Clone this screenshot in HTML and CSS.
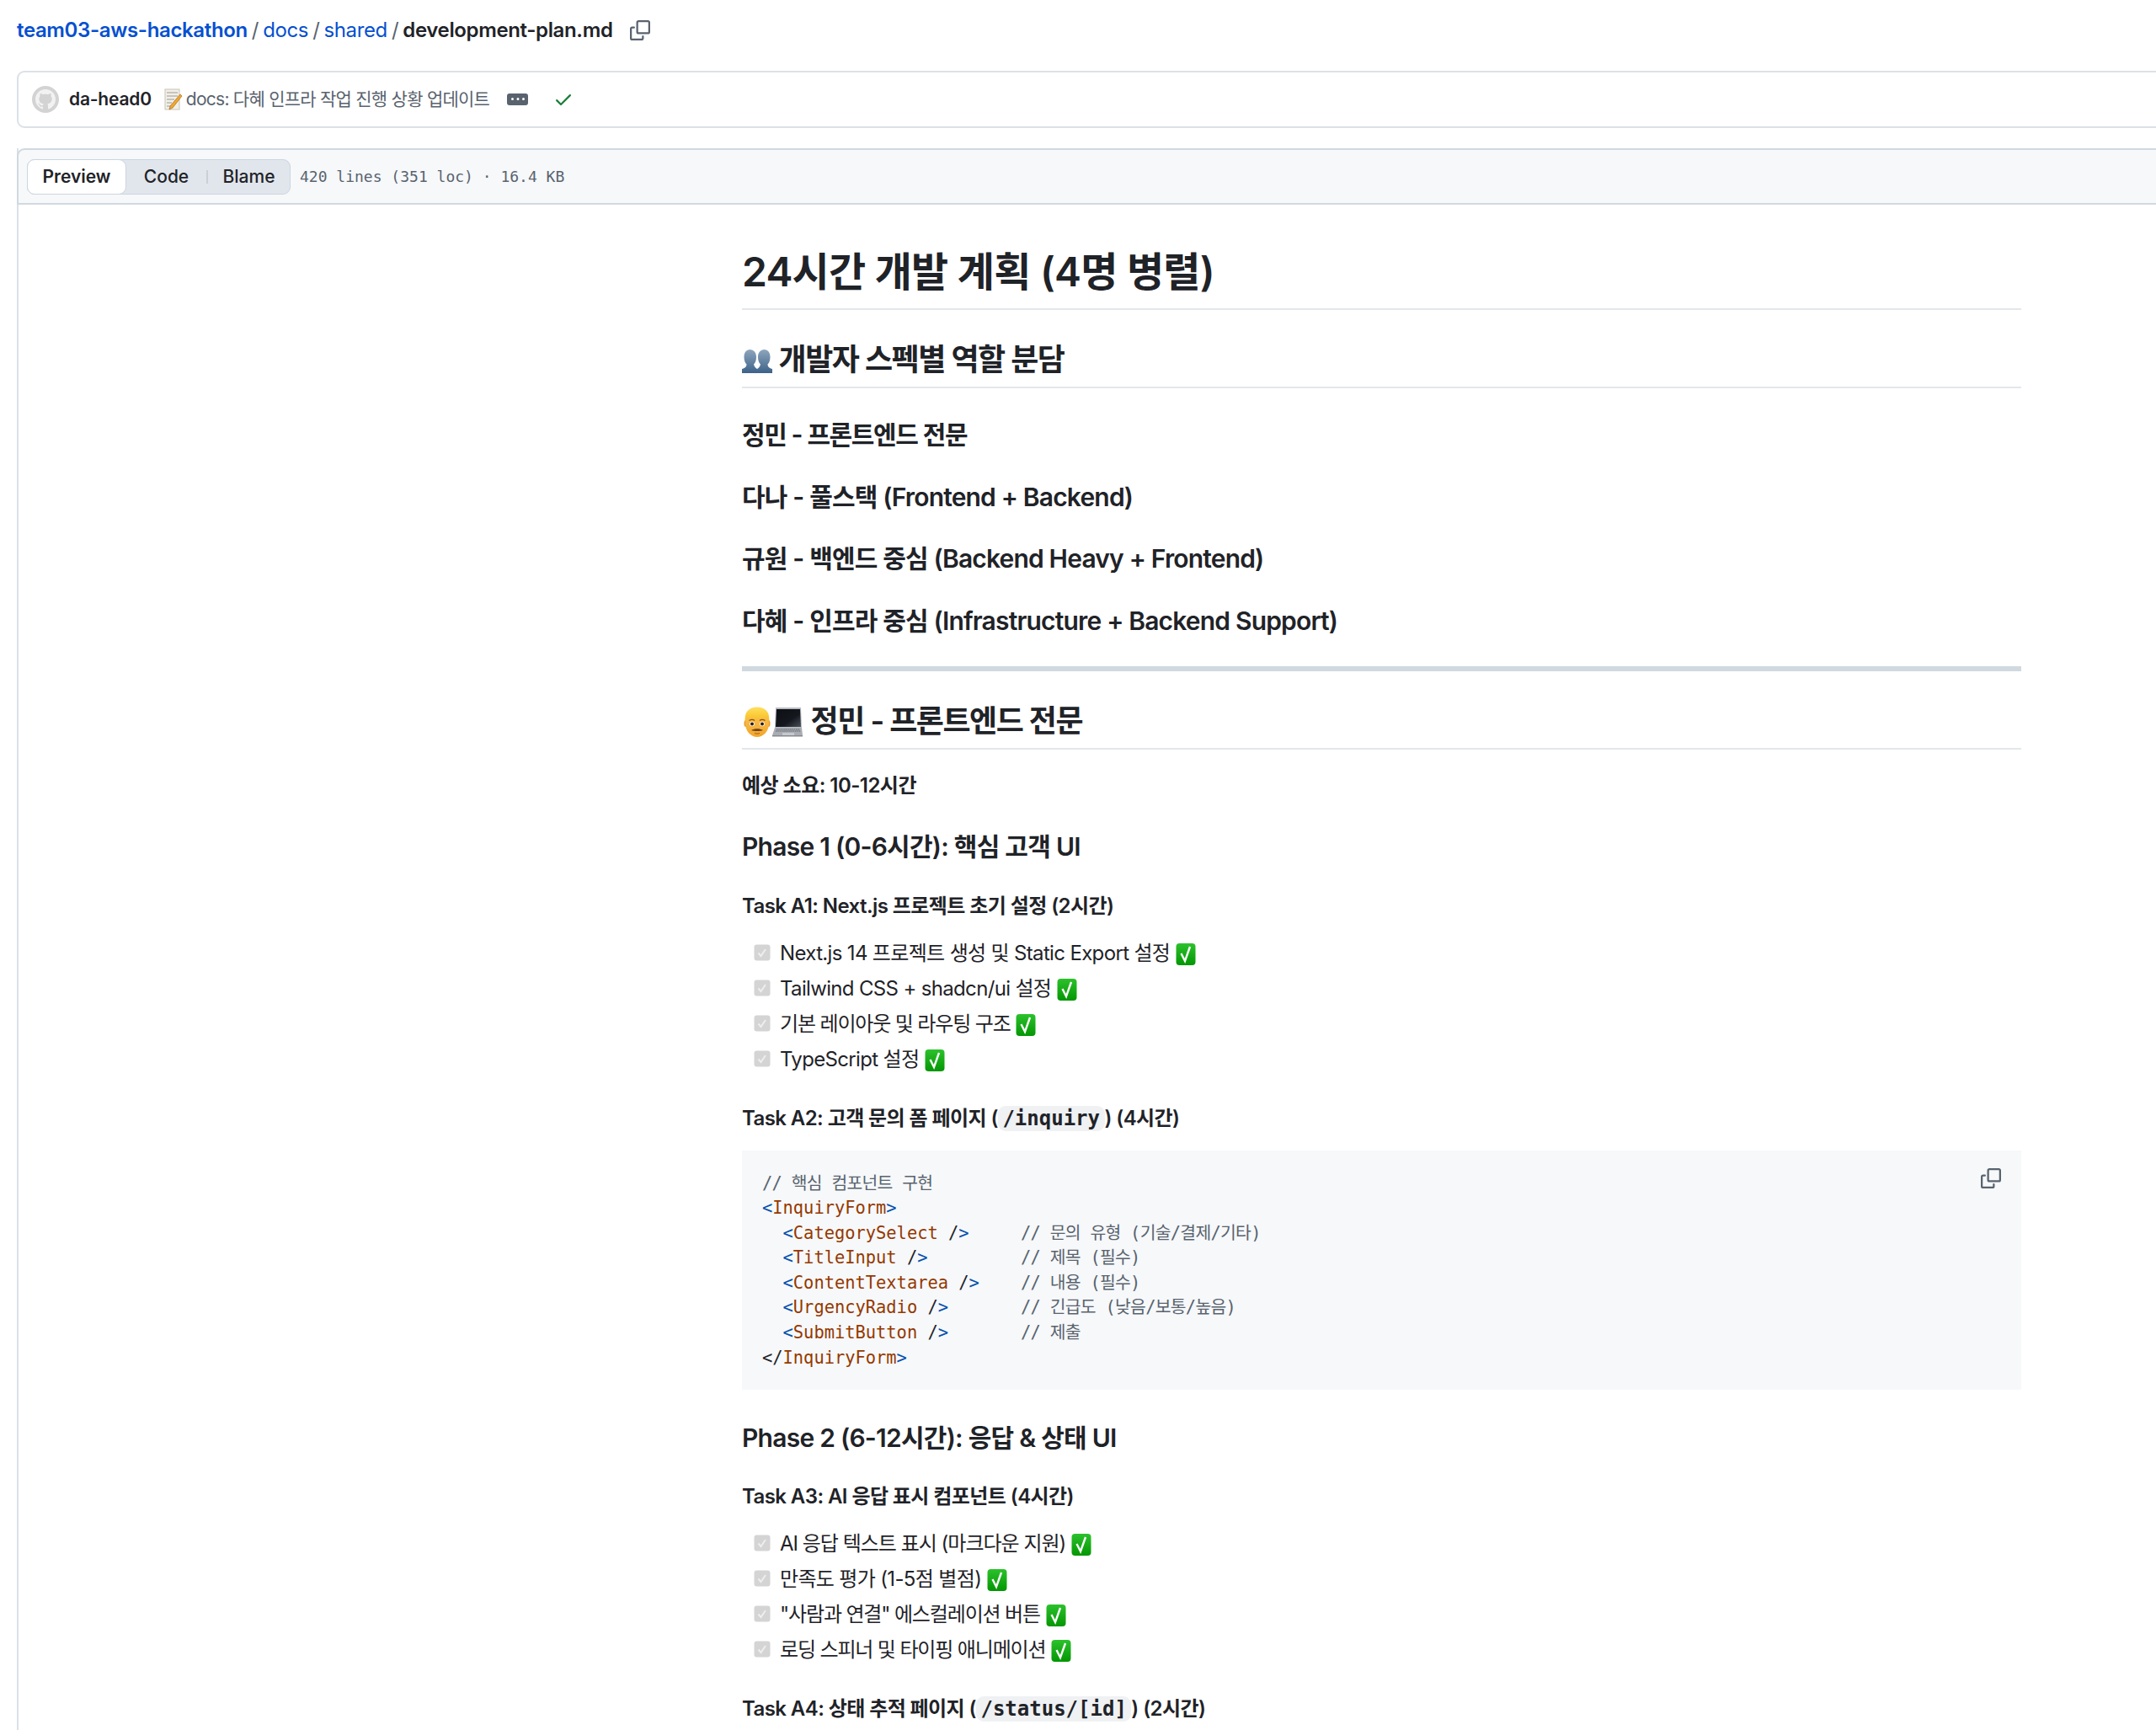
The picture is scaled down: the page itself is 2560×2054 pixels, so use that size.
FILE: index.html
```html
<!DOCTYPE html>
<html lang="ko">
<head>
<meta charset="utf-8">
<title>development-plan.md</title>
<link rel="stylesheet" href="styles.css">
</head>
<body>
<svg class="defs" aria-hidden="true">
  <defs>
    <linearGradient id="g" x1="0" y1="0" x2="0" y2="1"><stop offset="0" stop-color="#2cc22c"/><stop offset="1" stop-color="#049604"/></linearGradient>
  </defs>
  <symbol id="copy" viewBox="0 0 16 16"><path d="M0 6.75C0 5.784.784 5 1.75 5h1.5a.75.75 0 0 1 0 1.5h-1.5a.25.25 0 0 0-.25.25v7.5c0 .138.112.25.25.25h7.5a.25.25 0 0 0 .25-.25v-1.5a.75.75 0 0 1 1.5 0v1.5A1.75 1.75 0 0 1 9.25 16h-7.5A1.75 1.75 0 0 1 0 14.25Z"/><path d="M5 1.75C5 .784 5.784 0 6.75 0h7.5C15.216 0 16 .784 16 1.75v7.5A1.75 1.75 0 0 1 14.25 11h-7.5A1.75 1.75 0 0 1 5 9.25Zm1.75-.25a.25.25 0 0 0-.25.25v7.5c0 .138.112.25.25.25h7.5a.25.25 0 0 0 .25-.25v-7.5a.25.25 0 0 0-.25-.25Z"/></symbol>
  <symbol id="box" viewBox="0 0 20 20"><rect x=".5" y=".5" width="19" height="19" rx="3" fill="#d4d4d4"/><path d="M5.500 10.500l3 3.500 5.500-8" fill="none" stroke="#eeeeee" stroke-width="2"/></symbol>
  <symbol id="done" viewBox="0 0 24 28"><rect x=".5" y="1" width="23" height="26" rx="4" fill="url(#g)"/><path d="M6.500 13l4.500 9 6-17" fill="none" stroke="#fff" stroke-width="2.400"/></symbol>
</svg>

<header class="crumbs">
  <a href="#" class="crumb crumb-repo">team03-aws-hackathon</a><span class="sep">/</span><a href="#" class="crumb">docs</a><span class="sep">/</span><a href="#" class="crumb">shared</a><span class="sep">/</span><strong class="crumb-file">development-plan.md</strong>
  <svg class="icon copy-head"><use href="#copy"/></svg>
</header>

<section class="commit">
  <span class="avatar"><svg viewBox="0 0 16 16"><path d="M8 0c4.42 0 8 3.58 8 8a8.013 8.013 0 0 1-5.45 7.59c-.4.08-.55-.17-.55-.38 0-.27.01-1.13.01-2.2 0-.75-.25-1.23-.54-1.48 1.78-.2 3.65-.88 3.65-3.95 0-.88-.31-1.59-.82-2.15.08-.2.36-1.02-.08-2.12 0 0-.67-.22-2.2.82-.64-.18-1.32-.27-2-.27-.68 0-1.36.09-2 .27-1.53-1.03-2.2-.82-2.2-.82-.44 1.1-.16 1.92-.08 2.12-.51.56-.82 1.28-.82 2.15 0 3.06 1.86 3.75 3.64 3.95-.23.2-.44.55-.51 1.07-.46.21-1.61.55-2.33-.66-.15-.24-.6-.83-1.23-.82-.67.01-.27.38.01.53.34.19.73.9.82 1.13.16.45.68 1.31 2.69.94 0 .67.01 1.3.01 1.49 0 .21-.15.45-.55.38A7.995 7.995 0 0 1 0 8c0-4.42 3.58-8 8-8Z"/></svg></span>
  <strong class="author">da-head0</strong>
  <svg class="memo" viewBox="0 0 24 26"><rect x="3" y="1" width="17" height="24" fill="#f2efe6" stroke="#c9c4b6"/><path d="M5 5h13M5 9h13M5 13h9M5 17h6M5 21h5" stroke="#9a9a9a"/><path d="M21 7l2 2-11 14-4 2 1-4z" fill="#f0a830" stroke="#a86a18" stroke-width=".7"/></svg>
  <span class="message">docs: 다혜 인프라 작업 진행 상황 업데이트</span>
  <span class="more"><svg viewBox="0 0 16 16"><path d="M8 9a1.5 1.5 0 1 0 0-3 1.5 1.5 0 0 0 0 3ZM1.5 9a1.5 1.5 0 1 0 0-3 1.5 1.5 0 0 0 0 3Zm13 0a1.5 1.5 0 1 0 0-3 1.5 1.5 0 0 0 0 3Z"/></svg></span>
  <svg class="status" viewBox="0 0 16 16"><path d="M13.78 4.22a.75.75 0 0 1 0 1.06l-7.25 7.25a.75.75 0 0 1-1.06 0L2.22 9.28a.751.751 0 0 1 .018-1.042.751.751 0 0 1 1.042-.018L6 10.94l6.72-6.72a.75.75 0 0 1 1.06 0Z"/></svg>
</section>

<section class="file">
  <div class="file-head">
    <div class="toggle">
      <span class="tab tab-active">Preview</span>
      <span class="tab tab-code">Code</span>
      <span class="tab-sep"></span>
      <span class="tab tab-blame">Blame</span>
    </div>
    <span class="stats">420 lines (351 loc) · 16.4 KB</span>
  </div>

  <article class="doc">
    <h1>24시간 개발 계획 (4명 병렬)</h1>

    <h2><svg class="emoji-people" viewBox="0 0 36 30"><defs><linearGradient id="p" x1="0" y1="0" x2="0" y2="1"><stop offset="0" stop-color="#8ea6bd"/><stop offset="1" stop-color="#3c6288"/></linearGradient></defs><path d="M9.500 1c4.500 0 7.500 3.500 7.500 9 0 4.500-1.500 7-3 8.500.5 3 2.500 4.500 4 5.500v5H0v-5c3-.5 5.500-2.500 5.500-5.500C4 17 2.500 14.500 2.500 10c0-5.500 2.500-9 7-9z" fill="url(#p)"/><path d="M26.500 1c4.500 0 7 3.500 7 9 0 4.500-1.500 7-3 8.500 0 3 2.500 5 5.500 5.500v5H18v-5c1.500-1 3.500-2.500 4-5.500-1.500-1.500-3-4-3-8.500 0-5.500 3-9 7.500-9z" fill="url(#p)"/></svg> 개발자 스펙별 역할 분담</h2>

    <h3 class="role-han">정민 - 프론트엔드 전문</h3>
    <h3 class="role">다나 - 풀스택 (Frontend + Backend)</h3>
    <h3 class="role">규원 - 백엔드 중심 (Backend Heavy + Frontend)</h3>
    <h3 class="role">다혜 - 인프라 중심 (Infrastructure + Backend Support)</h3>

    <hr>

    <h2><svg class="emoji-dev" viewBox="0 0 72 36"><defs><linearGradient id="f" x1="0" y1="0" x2="0" y2="1"><stop offset="0" stop-color="#fbc655"/><stop offset="1" stop-color="#f2a62c"/></linearGradient><linearGradient id="s" x1="0" y1="0" x2="1" y2="1"><stop offset="0" stop-color="#0d0f14"/><stop offset=".6" stop-color="#14171d"/><stop offset="1" stop-color="#4a4f58"/></linearGradient><linearGradient id="h" x1="0" y1="0" x2="0" y2="1"><stop offset="0" stop-color="#ffdf5e"/><stop offset="1" stop-color="#f5b918"/></linearGradient></defs><ellipse cx="4.500" cy="20" rx="2" ry="4" fill="#e89a2a"/><ellipse cx="31.500" cy="20" rx="2" ry="4" fill="#e89a2a"/><ellipse cx="18" cy="20" rx="14" ry="16" fill="url(#f)"/><path d="M4 19C2 7 8 .5 18 .5S34 7 32 19c-.8-2.500-1.500-5-3-7-6 2.500-16 2.500-22 0-1.500 2-2.200 4.500-3 7z" fill="url(#h)"/><path d="M8.500 16.500c2-1.200 5-1.200 6.500 0M21 16.500c1.500-1.200 4.500-1.200 6.500 0" stroke="#8a5214" fill="none" stroke-width="1.300"/><circle cx="12" cy="20.500" r="2.800" fill="#fff"/><circle cx="24" cy="20.500" r="2.800" fill="#fff"/><circle cx="12" cy="20.500" r="2" fill="#2e1c0c"/><circle cx="24" cy="20.500" r="2" fill="#2e1c0c"/><path d="M11 28c4-2.200 10-2.200 14 0-4 1.300-10 1.300-14 0z" fill="#6e4217"/><path d="M15 31.500c2 .8 4 .8 6 0" stroke="#a8541a" fill="none"/><path d="M40 1h30l1 24H39z" fill="#b8bcc2"/><path d="M41 3h28l1 21H40z" fill="url(#s)"/><path d="M39 25h32l1 9H36z" fill="#a9adb3"/><path d="M41 27h28M40 29h30" stroke="#5d6168" stroke-width="1.200" stroke-dasharray="1.500 .8"/><path d="M48 31h14v3H48z" fill="#c6c9ce"/><path d="M36 34h36v1.500H36z" fill="#85898f"/></svg> 정민 - 프론트엔드 전문</h2>

    <p><strong>예상 소요: 10-12시간</strong></p>

    <h3 class="phase">Phase 1 (0-6시간): 핵심 고객 UI</h3>

    <h4>Task A1: Next.js 프로젝트 초기 설정 (2시간)</h4>
    <ul class="tasks">
      <li class="lat"><svg class="box"><use href="#box"/></svg>Next.js 14 프로젝트 생성 및 Static Export 설정 <svg class="done"><use href="#done"/></svg></li>
      <li class="lat"><svg class="box"><use href="#box"/></svg>Tailwind CSS + shadcn/ui 설정 <svg class="done"><use href="#done"/></svg></li>
      <li class="han"><svg class="box"><use href="#box"/></svg>기본 레이아웃 및 라우팅 구조 <svg class="done"><use href="#done"/></svg></li>
      <li class="lat"><svg class="box"><use href="#box"/></svg>TypeScript 설정 <svg class="done"><use href="#done"/></svg></li>
    </ul>

    <h4>Task A2: 고객 문의 폼 페이지 (<code>/inquiry</code>) (4시간)</h4>
    <div class="code">
      <svg class="icon copy-code"><use href="#copy"/></svg>
<pre><span class="c">// 핵심 컴포넌트 구현</span>
<span class="b">&lt;</span><span class="n">InquiryForm</span><span class="b">&gt;</span>
  <span class="b">&lt;</span><span class="n">CategorySelect</span> /<span class="b">&gt;</span>     <span class="c">// 문의 유형 (기술/결제/기타)</span>
  <span class="b">&lt;</span><span class="n">TitleInput</span> /<span class="b">&gt;</span>         <span class="c">// 제목 (필수)</span>
  <span class="b">&lt;</span><span class="n">ContentTextarea</span> /<span class="b">&gt;</span>    <span class="c">// 내용 (필수)</span>
  <span class="b">&lt;</span><span class="n">UrgencyRadio</span> /<span class="b">&gt;</span>       <span class="c">// 긴급도 (낮음/보통/높음)</span>
  <span class="b">&lt;</span><span class="n">SubmitButton</span> /<span class="b">&gt;</span>       <span class="c">// 제출</span>
&lt;/<span class="n">InquiryForm</span><span class="b">&gt;</span></pre>
    </div>

    <h3 class="phase phase-after-code">Phase 2 (6-12시간): 응답 &amp; 상태 UI</h3>

    <h4>Task A3: AI 응답 표시 컴포넌트 (4시간)</h4>
    <ul class="tasks">
      <li class="mix"><svg class="box"><use href="#box"/></svg>AI 응답 텍스트 표시 (마크다운 지원) <svg class="done"><use href="#done"/></svg></li>
      <li class="lat"><svg class="box"><use href="#box"/></svg>만족도 평가 (1-5점 별점) <svg class="done"><use href="#done"/></svg></li>
      <li class="han"><svg class="box"><use href="#box"/></svg>"사람과 연결" 에스컬레이션 버튼 <svg class="done"><use href="#done"/></svg></li>
      <li class="han"><svg class="box"><use href="#box"/></svg>로딩 스피너 및 타이핑 애니메이션 <svg class="done"><use href="#done"/></svg></li>
    </ul>

    <h4>Task A4: 상태 추적 페이지 (<code>/status/[id]</code>) (2시간)</h4>
  </article>
</section>
</body>
</html>
```

FILE: styles.css
```css
* { box-sizing: border-box; }
html, body { margin: 0; height: 2054px; overflow: hidden; background: #fff; }
body {
  width: 2600px;
  padding-left: 20px;
  color: #1f2328;
  font-family: Inter, "Noto Sans CJK KR", sans-serif;
  font-size: 24px;
  line-height: 36px;
}
.defs { position: absolute; width: 0; height: 0; }
.icon { fill: #59636e; width: 24px; height: 24px; }

.crumbs { height: 72px; display: flex; align-items: center; font-size: 24px; color: #59636e; letter-spacing: -.36px; }
.crumb { text-decoration: none; color: #0550d0; }
.crumb-repo { font-weight: 600; }
.sep { margin: 0 5px; }
.crumb-file { font-weight: 600; color: #1f2328; }
.copy-head { margin-left: 20px; }

.commit {
  margin-top: 12px;
  height: 68px;
  border: 2px solid #dbe1e7;
  border-radius: 9px;
  display: flex;
  align-items: center;
  padding-left: 16px;
  font-size: 21px;
}
.avatar { width: 32px; height: 32px; border-radius: 50%; background: #d3d3d3; display: flex; align-items: center; justify-content: center; }
.avatar svg { width: 24px; height: 24px; fill: #f2f2f2; }
.author { margin-left: 12px; font-weight: 600; letter-spacing: -.2px; }
.memo { width: 24px; height: 26px; margin-left: 13px; }
.message { margin-left: 4px; color: #59636e; letter-spacing: -.75px; }
.more { margin-left: 21px; width: 25px; height: 14px; border-radius: 3px; background: #59636e; display: flex; align-items: center; justify-content: center; }
.more svg { width: 16px; height: 16px; fill: #fff; }
.status { margin-left: 30px; width: 24px; height: 24px; fill: #1a7f37; }

.file { margin-top: 24px; min-height: 1900px; border-left: 2px solid #dbe1e7; }
.file-head {
  height: 67px;
  margin-left: -2px;
  background: #f6f8fa;
  border: 2px solid #d1d9e0;
  border-radius: 9px 0 0 0;
  display: flex;
  align-items: center;
  padding-left: 10px;
}
.toggle {
  width: 313px;
  height: 42px;
  display: flex;
  align-items: center;
  background: #e1e6ed;
  border: 1px solid #cdd5dd;
  border-radius: 9px;
  font-size: 21px;
  font-weight: 500;
}
.tab { display: block; line-height: 40px; text-align: center; }
.tab-active { width: 118px; height: 42px; margin: -1px 0 -1px -1px; line-height: 40px; background: #fff; border: 1px solid #cdd5dd; border-radius: 9px; font-weight: 600; }
.tab-code { width: 95px; }
.tab-sep { width: 2px; height: 16px; background: #c8d0d8; }
.tab-blame { width: 97px; }
.stats { margin-left: 11px; font-family: "DejaVu Sans Mono", monospace; font-size: 18px; color: #59636e; }

.doc { width: 1519px; margin-left: 859px; padding-top: 49px; }
h1, h2, h3, h4 { font-weight: 600; margin: 36px 0 24px; }
h1 { margin-top: 0; font-size: 48px; line-height: 58px; padding: 2px 0 14px; border-bottom: 2px solid #e3e7ec; letter-spacing: -.77px; }
h2 { font-size: 36px; line-height: 43px; padding: 2px 0 10px; border-bottom: 2px solid #e3e7ec; letter-spacing: -1.5px; }
h3 { font-size: 30px; line-height: 35.5px; padding-top: 2px; }
h4 { font-size: 24px; line-height: 28px; padding-top: 2px; letter-spacing: -.58px; }
.role { letter-spacing: -.82px; }
.role-han { letter-spacing: -1.38px; }
.phase { letter-spacing: -.75px; }
.phase-after-code { margin-top: 37.5px; }
p { margin: 0 0 24px; padding-top: 2px; line-height: 34px; letter-spacing: -.54px; }
strong { font-weight: 600; }
hr { height: 6px; margin: 36px 0; padding: 0; border: 0; background: #d1d9e0; }
.emoji-people { width: 36px; height: 30px; vertical-align: -4px; }
.emoji-dev { width: 72px; height: 36px; vertical-align: -6px; margin-right: 2px; }

.tasks { list-style: none; margin: 0 0 24px; padding: 0 0 0 45px; }
.tasks li { position: relative; margin-top: 6px; }
.tasks li:first-child { margin-top: 0; }
.lat { letter-spacing: -.66px; }
.mix { letter-spacing: -1px; }
.han { letter-spacing: -1.15px; }
.box { position: absolute; left: -31px; top: 7px; width: 20px; height: 20px; }
.done { width: 24px; height: 28px; vertical-align: -7px; margin-left: 1px; }

code {
  font-family: "DejaVu Sans Mono", monospace;
  font-size: 24px;
  letter-spacing: 0;
  padding: 1px 5.5px;
  background: #eff1f3;
  border-radius: 9px;
}
.code { position: relative; margin-bottom: 24px; background: #f6f8fa; padding: 25px 24px 23px; }
.copy-code { position: absolute; top: 21px; right: 24px; }
pre { margin: 0; font-family: "DejaVu Sans Mono", "Noto Sans CJK KR", monospace; font-size: 20.4px; line-height: 29.58px; }
.c { color: #59636e; letter-spacing: -.7px; }
.b { color: #0550ae; }
.n { color: #953800; }
```
